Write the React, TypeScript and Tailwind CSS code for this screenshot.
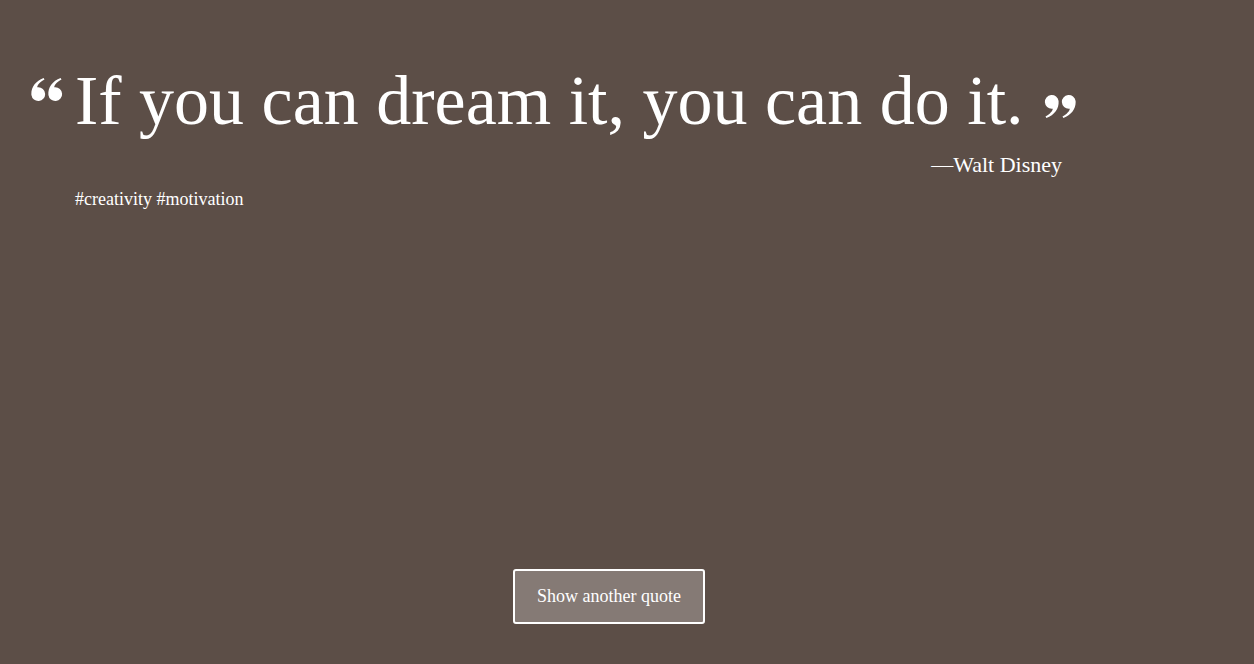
import React from 'react';

function QuoteMark({ close = false }: { close?: boolean }) {
    // one heavy comma drawn twice; the closing mark is the same shape turned round
    const comma = 'M7 9.2a6.9 6.9 0 1 1-6.6 7.8C-0.2 9.5 4.5 3 12.6 0l0.9 1.6C8.6 4.3 6.4 7.2 6.2 9.3z';
    return (
        <svg width="32" height="24" viewBox="0 0 32 24" className={close ? 'rotate-180' : ''}>
            <path d={comma} fill="white" />
            <path d={comma} fill="white" transform="translate(17 0)" />
        </svg>
    );
}

export default function App() {
    return (
        <div
            className="h-[664px] bg-[#5c4e47] text-white flex flex-col"
            style={{ fontFamily: '"Liberation Serif", "Times New Roman", serif' }}
        >
            <div className="pt-[66px] pl-[31px]">
                <div className="flex items-start">
                    <div className="mt-[12px]">
                        <QuoteMark />
                    </div>
                    <h1 className="ml-[12px] text-[70px] leading-none font-normal whitespace-nowrap">
                        If you can dream it, you can do it.
                    </h1>
                    <div className="ml-[20px] mt-[28px]">
                        <QuoteMark close />
                    </div>
                </div>
                <p className="w-[1031px] mt-[18px] text-right text-[22px] leading-none">—Walt Disney</p>
                <p className="mt-[14px] pl-[44px] text-[18px] leading-none">#creativity #motivation</p>
            </div>

            <div className="mt-auto pb-[40px] pl-[513px]">
                <button className="h-[55px] px-[22px] border-2 border-white rounded-[3px] bg-white/25 text-[18px] text-white">
                    Show another quote
                </button>
            </div>
        </div>
    );
}
